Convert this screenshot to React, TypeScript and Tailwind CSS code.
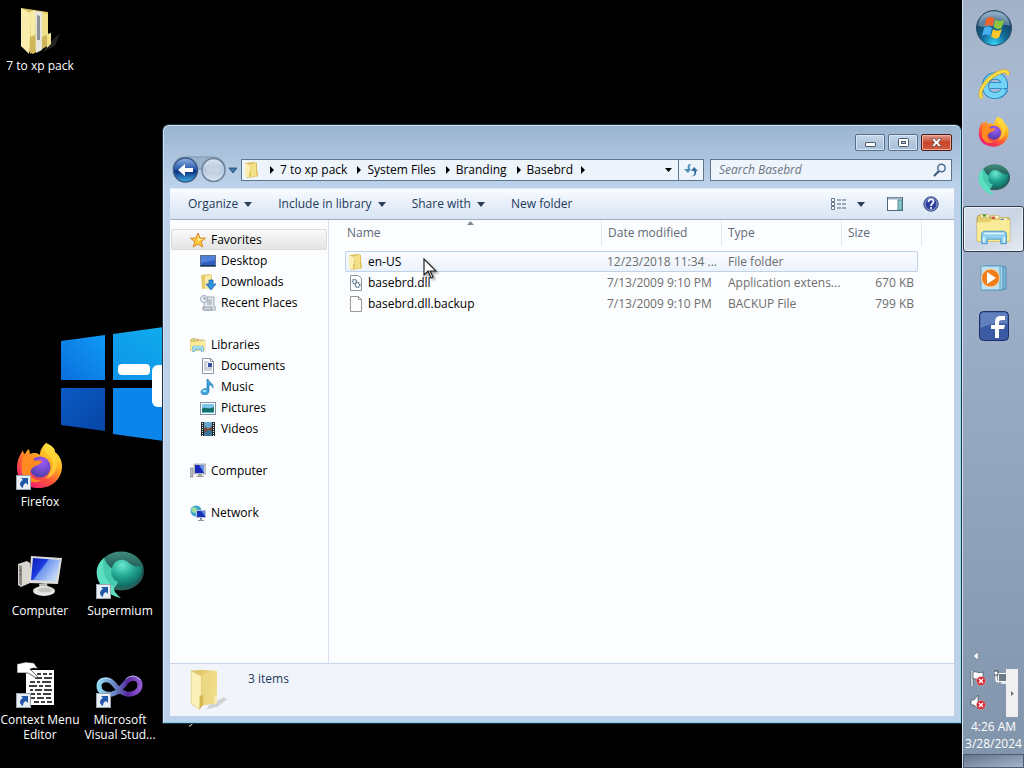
import type { ReactNode } from "react";

type IconProps = { className?: string };

const FirefoxIcon = ({ className }: IconProps) => (
  <svg viewBox="0 0 48 48" className={className} aria-hidden="true">
    <defs>
      <linearGradient id="ffBody" x1="0.85" y1="0.05" x2="0.25" y2="0.95">
        <stop offset="0" stopColor="#fff04a" />
        <stop offset="0.35" stopColor="#ffb01e" />
        <stop offset="0.65" stopColor="#ff5b36" />
        <stop offset="1" stopColor="#ee1d6f" />
      </linearGradient>
      <radialGradient id="ffGlobe" cx="0.6" cy="0.25" r="0.8">
        <stop offset="0" stopColor="#a25bf5" />
        <stop offset="1" stopColor="#4a3ba8" />
      </radialGradient>
    </defs>
    <path
      d="M30 1c-4 4-6 7-6 12-4-3-7-2-10-1l-1-5c-2 1-3 3-4 5-1 0-2-2-2-4-3 5-6 10-6 18 0 12 9 20 22 20s23-9 23-22c0-6-3-11-7-14 0-4-3-6-9-9z"
      fill="url(#ffBody)"
    />
    <circle cx="24" cy="25" r="10.500" fill="url(#ffGlobe)" />
    <path d="M7 14c5-1 9 1 12 5 2-1 5-1 7 0-1 3-4 4-7 5-3 2-5 4-5 8 2 5 6 7 12 6-9 5-18 1-20-7-1-6 0-12 1-17z" fill="#ff8a1f" />
    <path d="M30 1c6 6 12 12 11 22-1 7-5 12-11 14 4-6 8-12 6-19-2-5-11-9-6-17z" fill="#ffd83a" opacity="0.75" />
  </svg>
);

const SupermiumIcon = ({ className }: IconProps) => (
  <svg viewBox="0 0 48 48" className={className} aria-hidden="true">
    <defs>
      <radialGradient id="smBall" cx="0.35" cy="0.2" r="0.8">
        <stop offset="0" stopColor="#6be8cf" />
        <stop offset="0.5" stopColor="#24a893" />
        <stop offset="1" stopColor="#0b6a60" />
      </radialGradient>
      <linearGradient id="smRing" x1="0" y1="0" x2="0" y2="1">
        <stop offset="0" stopColor="#3f8c7c" />
        <stop offset="0.5" stopColor="#1f5450" />
        <stop offset="1" stopColor="#2c6661" />
      </linearGradient>
    </defs>
    <ellipse cx="25" cy="20" rx="23" ry="19.500" fill="url(#smRing)" />
    <path d="M16 17c2-8 11-11 17-5 5 4 9 4 13 3 1 13-9 21-21 21-6-1-11-9-9-19z" fill="url(#smBall)" />
    <path d="M8 7C1 12-1 21 2 29c4 9 12 16 23 18-5-4-7-7-7-10 2-2 3-4 4-6-6-2-8-8-6-13-4-3-6-6-8-11z" fill="#5ddfc2" />
    <path d="M8 7c2 5 5 8 9 11-2 6 0 10 5 13l-4 5C9 30 5 18 8 7z" fill="#35bda0" opacity="0.6" />
  </svg>
);

const PackFolderIcon = ({ className }: IconProps) => (
  <svg viewBox="0 0 48 48" className={className} aria-hidden="true">
    <path d="M30 40l14-13-5 13-12 6z" fill="#8a8a8a" opacity="0.25" />
    <path d="M5 2l27 4v33l-6 3-9 6-12-8z" fill="#d8c45c" />
    <path d="M14 6l5-2v39l-4 4z" fill="#f6eca6" />
    <path d="M19 5l7 1v38l-6 3z" fill="#e8e6df" />
    <path d="M21 9l3 1v24l-3 0z" fill="#8d9196" />
    <path d="M26 6l6 2v31l-6 4z" fill="#efe08a" />
    <path d="M5 2l9 5v24l-1 17-8-8z" fill="#f9ecac" />
    <path d="M14 31l5-2v16l-5 3zM26 31l5-2v11l-5 3z" fill="#cdb75a" />
    <path d="M31 28l4-1v11l-4 4z" fill="#f1e28c" />
  </svg>
);

const OpenFolderIcon = ({ className }: IconProps) => (
  <svg viewBox="0 0 48 48" className={className} aria-hidden="true">
    <defs>
      <linearGradient id="folderInner" x1="0" y1="0" x2="1" y2="0">
        <stop offset="0" stopColor="#d9bd5c" />
        <stop offset="1" stopColor="#f3e08f" />
      </linearGradient>
    </defs>
    <path d="M27 41l16-9 4 2-10 8-12 3z" fill="#a8a8a0" opacity="0.45" />
    <path d="M8 3l10-1 18 1v32l-4 4-13 2z" fill="url(#folderInner)" />
    <path d="M19 8l14-4 3 1v32l-17 4z" fill="#f0dc88" opacity="0.7" />
    <path d="M8 3l11 6v21l-2 15-9-6z" fill="#fbf0b8" stroke="#dfc977" strokeWidth="0.800" />
    <path d="M17 30h4v10l-4 5z" fill="#d5b74f" />
    <path d="M33 30l3-1v9l-3 2z" fill="#faedaf" />
  </svg>
);

const ComputerIcon = ({ className }: IconProps) => (
  <svg viewBox="0 0 48 48" className={className} aria-hidden="true">
    <defs>
      <linearGradient id="pcScreen" x1="0" y1="0" x2="1" y2="0.6">
        <stop offset="0" stopColor="#0a1fb4" />
        <stop offset="0.45" stopColor="#1c3be0" />
        <stop offset="0.5" stopColor="#6f95ef" />
        <stop offset="1" stopColor="#c2d8f8" />
      </linearGradient>
    </defs>
    <path d="M2 13l9-3 3 2v20l-9 4-3-2z" fill="#d9d7d0" />
    <path d="M3 14l3 1v20l-3-2z" fill="#8f8d87" />
    <path d="M4 19l1 1M4 23l1 1" stroke="#333" />
    <path d="M23 33l8-1 1 6h-8z" fill="#bdbcb7" />
    <ellipse cx="28" cy="40" rx="11" ry="5" fill="#e6e5e1" />
    <ellipse cx="29" cy="39" rx="7" ry="2.500" fill="#c5c4bf" />
    <path d="M15 5l31 2-4 26-29-1z" fill="#dcdcda" />
    <path d="M17 7l27 2-4 21-25-1z" fill="url(#pcScreen)" />
  </svg>
);

const ContextMenuIcon = ({ className }: IconProps) => (
  <svg viewBox="0 0 48 48" className={className} aria-hidden="true">
    <path d="M10 10h28v35H10z" fill="#fff" />
    <path
      d="M21 14h4m2 0h4m2 0h3M19 18h7m2 0h8M14 22h5m2 0h3m2 0h9M13 26h8m2 0h4m2 0h6M14 30h3m2 0h7m2 0h8M13 34h6m2 0h4m2 0h8M14 38h5m2 0h7m2 0h5M18 42h5m2 0h4m2 0h5"
      stroke="#000"
      strokeWidth="1.600"
    />
    <path d="M1 4l9-2 8 1 4 6-4-1-4 1 7 7 1 3-10-6H1z" fill="#fff" stroke="#000" strokeWidth="0.600" />
  </svg>
);

const VisualStudioIcon = ({ className }: IconProps) => (
  <svg viewBox="0 0 48 48" className={className} aria-hidden="true">
    <defs>
      <linearGradient id="vsLoop" x1="0" y1="0" x2="1" y2="0">
        <stop offset="0" stopColor="#8ed6ee" />
        <stop offset="0.5" stopColor="#5d69b4" />
        <stop offset="0.7" stopColor="#5a25a0" />
        <stop offset="1" stopColor="#8f5ad0" />
      </linearGradient>
    </defs>
    <path
      d="M3 26c0-7 9-8 14-3 4 5 8 10 14 11 7 1 13-3 13-9 0-7-8-9-13-4-5 6-9 12-15 13C9 35 3 32 3 26z"
      fill="none"
      stroke="url(#vsLoop)"
      strokeWidth="5"
    />
    <path d="M2 23c3-5 8-6 13-3M30 19c4-4 10-4 14 1" fill="none" stroke="#d5efff" strokeWidth="1" opacity="0.7" />
  </svg>
);

const StartOrb = () => (
  <svg viewBox="0 0 40 40" className="size-10" aria-hidden="true">
    <defs>
      <radialGradient id="orb" cx="0.5" cy="0.95" r="0.85">
        <stop offset="0" stopColor="#35d4f5" />
        <stop offset="0.4" stopColor="#12709f" />
        <stop offset="0.8" stopColor="#164568" />
        <stop offset="1" stopColor="#5d86a4" />
      </radialGradient>
    </defs>
    <circle cx="20" cy="20" r="17.500" fill="url(#orb)" stroke="#2d4a66" />
    <path d="M4 18C6 8 12 3.500 20 3.500S34 8 36 18c-9-4-22 3-32 0z" fill="#dcecf5" opacity="0.35" />
    <path d="M12.500 10.500c3-2 5-2 8 0l-2 8c-3-2-5-2-8 0z" fill="#f0632a" />
    <path d="M21.500 11.500c3 2 5 2 9 0l-3 8.500c-3 2-5 1-8-1z" fill="#8cc63e" />
    <path d="M10 20c3-2 5-2 8 0l-2 8c-3-2-5-2-8 0z" fill="#47aef0" />
    <path d="M19 21c3 2 5 2 9 0l-3 8.500c-3 2-5 1-8-1z" fill="#fcc62c" />
  </svg>
);

const ExplorerBrowserIcon = () => (
  <svg viewBox="0 0 32 32" className="size-8" aria-hidden="true">
    <path
      d="M27 21c-2 4-5 6.500-10 6.500-6 0-9.500-4-9.500-9.500S11 8 17 8s9.500 3.500 9.500 9.500H12"
      fill="none"
      stroke="#1878b8"
      strokeWidth="7"
    />
    <path
      d="M26.500 21.500c-2 3.500-5 6-9.500 6-6 0-9.500-4-9.500-9.500S11 8 17 8s9.500 3.500 9.500 9.500H12"
      fill="none"
      stroke="#74d4f8"
      strokeWidth="5.400"
    />
    <path d="M4 30C-1 25 7 12 18 6c7-4 12-4 12 1" fill="none" stroke="#c99b1c" strokeWidth="3.800" />
    <path d="M4 30C-1 25 7 12 18 6c7-4 12-4 12 1" fill="none" stroke="#f9dc4a" strokeWidth="2.600" />
  </svg>
);

const LibraryIcon = ({ className }: IconProps) => (
  <svg viewBox="0 0 32 32" className={className} aria-hidden="true">
    <path d="M2 4h9l2 2h16l1 2v19H1V6z" fill="#e3cd6d" stroke="#b19a42" strokeWidth="0.800" />
    <path d="M4 3h7l1 3H4zM13 4h7l1 3h-7zM21 6h7v3h-6z" fill="#fff6cb" stroke="#c4ad54" strokeWidth="0.600" />
    <path d="M6 3h3v2H6z" fill="#4d9c3c" />
    <path d="M14 5h3v2h-3z" fill="#d65336" />
    <path d="M22 7h3v1h-3z" fill="#4a7fc3" />
    <path d="M1 10h11l2-2h16v19H1z" fill="#faeb98" />
    <path d="M5 21c0-2 1-3 3-3h16c2 0 3 1 3 3v8h-5v-4H10v4H5z" fill="#8fd0ee" stroke="#3f93c4" strokeWidth="0.800" />
    <path d="M7 20h18M7 23v5M25 23v5" stroke="#dff4fc" strokeWidth="1.500" />
  </svg>
);

const MediaPlayerIcon = () => (
  <svg viewBox="0 0 32 32" className="size-8" aria-hidden="true">
    <path d="M10 5h18v22H10z" fill="#7fb9d6" stroke="#4b8fb5" />
    <path d="M7 4h18v24H7z" fill="#a5d4ea" stroke="#4b8fb5" />
    <path d="M3 4h19v24H3z" fill="#bfe2f1" stroke="#5c9fc2" />
    <circle cx="12.500" cy="16" r="9" fill="#f07d1b" stroke="#fbd2a0" />
    <path d="M9 10l9 6-9 6z" fill="#fff" />
  </svg>
);

const FacebookIcon = () => (
  <svg viewBox="0 0 32 32" className="size-8" aria-hidden="true">
    <rect x="1.500" y="1.500" width="29" height="29" rx="4" fill="#3b5ba5" stroke="#1d2f66" />
    <path d="M2.500 5a3 3 0 0 1 3-2.500h21a3 3 0 0 1 3 2.500v9c-9-2-18 0-27 4z" fill="#7d97cf" opacity="0.6" />
    <path d="M17 28V19h-4v-4h4v-3c0-4 2-6 6-6h4v4h-3c-2 0-3 1-3 2v3h6l-1 4h-5v9z" fill="#fff" />
  </svg>
);

const ShortcutBadge = () => (
  <svg viewBox="0 0 15 15" className="absolute bottom-0 left-0 size-[15px]" aria-hidden="true">
    <rect width="15" height="15" fill="#e9eef4" />
    <rect x="0.500" y="0.500" width="14" height="14" fill="none" stroke="#9aa4b0" />
    <path d="M5 3h7v7l-2-2c-2 1-3 2-3 5-4-2-4-6 0-8z" fill="#1f58a8" />
  </svg>
);

const FolderSmall = () => (
  <svg viewBox="0 0 16 16" className="size-4 shrink-0" aria-hidden="true">
    <path d="M1 1l9-1 3 1v13l-3 1-7 1z" fill="#dcbd55" />
    <path d="M6 2l6-1v13l-5 1z" fill="#f5e08a" />
    <path d="M1 1l5 2v13l-5-2z" fill="#fbefb3" />
    <path d="M5 10h2v4l-2 2zM12 9h2v5l-2 1z" fill="#e4c766" />
  </svg>
);

const StarIcon = () => (
  <svg viewBox="0 0 16 16" className="size-4" aria-hidden="true">
    <path d="M8 1l2 5 5.500.2-4.300 3.500 1.600 5.300L8 12l-4.800 3 1.600-5.300L.5 6.200 6 6z" fill="#ffc83c" stroke="#d9862a" />
    <path d="M8 3l1.300 4L13 7.300 8 9z" fill="#fff0a8" />
  </svg>
);

const DesktopSmall = () => (
  <svg viewBox="0 0 16 16" className="size-4" aria-hidden="true">
    <rect x="0.500" y="2.500" width="15" height="11" fill="#2f5fc4" stroke="#5b6f8c" />
    <path d="M1 3h14v4L1 10z" fill="#6b98e6" opacity="0.6" />
    <path d="M1 12h14v1H1z" fill="#1b2f52" />
  </svg>
);

const DownloadsSmall = () => (
  <svg viewBox="0 0 16 16" className="size-4" aria-hidden="true">
    <path d="M1 1l8-1 3 1v13l-10 1z" fill="#e5ca68" />
    <path d="M5 2l6-1v12l-6 2z" fill="#f9ecac" />
    <path d="M9 6h4v4h3l-5 6-5-6h3z" fill="#2f93dd" stroke="#1a5f9f" strokeWidth="0.700" />
  </svg>
);

const RecentSmall = () => (
  <svg viewBox="0 0 16 16" className="size-4" aria-hidden="true">
    <path d="M5 2h9v10h2v3H5l-1-3z" fill="#e8ecf0" stroke="#8a96a3" strokeWidth="0.800" />
    <path d="M7 5h5M7 7h5M7 9h5M3 12h9v3H3z" stroke="#7e8c9b" fill="#d3dae1" strokeWidth="0.800" />
    <circle cx="4" cy="4" r="3.500" fill="#eef3f8" stroke="#8393a6" strokeWidth="0.800" />
    <path d="M4 2v2h2" stroke="#55657a" strokeWidth="0.800" fill="none" />
  </svg>
);

const DocumentSmall = () => (
  <svg viewBox="0 0 16 16" className="size-4" aria-hidden="true">
    <path d="M2.500.5h8l3 3v12h-11z" fill="#fff" stroke="#8a93a8" />
    <path d="M4 4h5M4 6h3M4 8h3M4 10h8M4 12h8" stroke="#97a3bb" />
    <path d="M8 5h4v4H8z" fill="#3d4fa3" />
    <path d="M10.500.5v3h3" fill="none" stroke="#8a93a8" />
  </svg>
);

const MusicSmall = () => (
  <svg viewBox="0 0 16 16" className="size-4" aria-hidden="true">
    <path d="M8 0c0 3 6 4 5 9-1-3-3-3-4-3v6c0 5-8 5-8 1 0-3 4-4 6-3V0z" fill="#3ba3da" stroke="#1d6fa8" strokeWidth="0.600" />
    <ellipse cx="4.500" cy="12" rx="2" ry="1.200" fill="#a2dcf5" />
  </svg>
);

const PicturesSmall = () => (
  <svg viewBox="0 0 16 16" className="size-4" aria-hidden="true">
    <rect x="0.500" y="2.500" width="15" height="12" fill="#fff" stroke="#7f93a8" />
    <path d="M2 4h12v9H2z" fill="#7cc7ee" />
    <path d="M2 9c3-3 6 1 12-2v6H2z" fill="#15716f" />
    <path d="M2 12h12v1H2z" fill="#64b6c2" />
  </svg>
);

const VideosSmall = () => (
  <svg viewBox="0 0 16 16" className="size-4" aria-hidden="true">
    <path d="M1 1h14v14H1z" fill="#20262e" />
    <path d="M4 1h8v7H4z" fill="#67a5cf" />
    <path d="M4 8h8v7H4z" fill="#3a749d" />
    <path d="M5 5l3 3 4-3v5L8 9l-4 3z" fill="#7a4c34" />
    <path d="M2.500 2v13M13.500 2v13" stroke="#e8eef2" strokeDasharray="1 1" />
  </svg>
);

const ComputerSmall = () => (
  <svg viewBox="0 0 16 16" className="size-4" aria-hidden="true">
    <path d="M0 5h3v9H0z" fill="#b9bcc0" stroke="#77797d" strokeWidth="0.600" />
    <path d="M4 1h12v10H4z" fill="#c9cdd2" stroke="#8b8f96" strokeWidth="0.600" />
    <path d="M5 2h9v8H5z" fill="#1526b8" />
    <path d="M9 2h5v8z" fill="#6e92e6" />
    <path d="M8 11h4v2h2v1H6v-1h2z" fill="#9fa3a8" />
  </svg>
);

const NetworkSmall = () => (
  <svg viewBox="0 0 16 16" className="size-4" aria-hidden="true">
    <circle cx="6" cy="6" r="5.500" fill="#3fa4cf" />
    <path d="M3 2c3 0 3 2 5 3s-1 4-3 3-3-1-4-3z" fill="#9ce0a1" />
    <path d="M6 5h10v8H6z" fill="#b9c3d0" />
    <path d="M7 6h8v6H7z" fill="#1632b6" />
    <path d="M11 6h4v5z" fill="#5f8be0" />
    <path d="M10 13h2v2h2v1H8v-1h2z" fill="#8b96a5" />
  </svg>
);

const DllIcon = () => (
  <svg viewBox="0 0 16 16" className="size-4 shrink-0" aria-hidden="true">
    <path d="M2.500.5h8l3 3v12h-11z" fill="#fff" stroke="#8f959c" />
    <circle cx="6.500" cy="6.500" r="2" fill="none" stroke="#5b7489" strokeWidth="1.500" strokeDasharray="1.200 0.500" />
    <circle cx="9.500" cy="10" r="2.300" fill="none" stroke="#5b7489" strokeWidth="1.500" strokeDasharray="1.200 0.500" />
  </svg>
);

const BlankFileIcon = () => (
  <svg viewBox="0 0 16 16" className="size-4 shrink-0" aria-hidden="true">
    <path d="M2.500.5h8l3 3v12h-11z" fill="#fdfdfd" stroke="#9a9a9a" />
    <path d="M10.500.5v3h3" fill="none" stroke="#9a9a9a" />
  </svg>
);

const Caret = () => (
  <svg viewBox="0 0 8 5" className="h-[5px] w-2" aria-hidden="true">
    <path d="M0 0h8L4 5z" fill="#2c3f56" />
  </svg>
);

const CrumbArrow = () => (
  <svg viewBox="0 0 4 8" className="h-2 w-1 shrink-0" aria-hidden="true">
    <path d="M0 0l4 4-4 4z" fill="#000" />
  </svg>
);

const TrayError = () => (
  <>
    <circle cx="11" cy="11" r="4.500" fill="#d8242f" stroke="#f3b6b6" strokeWidth="0.500" />
    <path d="M9 9l4 4M13 9l-4 4" stroke="#fff" strokeWidth="1.400" />
  </>
);

const DesktopItem = ({ label, shortcut, place, children }: { label: string; shortcut?: boolean; place: string; children: ReactNode }) => (
  <button type="button" className={`flex flex-col items-center gap-1 pt-1.5 text-white ${place}`}>
    <span className="relative block size-12">
      {children}
      {shortcut && <ShortcutBadge />}
    </span>
    <span className="w-20 text-center text-xs leading-[15px]">{label}</span>
  </button>
);

const sidebar = [
  {
    name: "Favorites",
    icon: <StarIcon />,
    items: [
      { name: "Desktop", icon: <DesktopSmall /> },
      { name: "Downloads", icon: <DownloadsSmall /> },
      { name: "Recent Places", icon: <RecentSmall /> },
    ],
  },
  {
    name: "Libraries",
    icon: <LibraryIcon className="size-4" />,
    items: [
      { name: "Documents", icon: <DocumentSmall /> },
      { name: "Music", icon: <MusicSmall /> },
      { name: "Pictures", icon: <PicturesSmall /> },
      { name: "Videos", icon: <VideosSmall /> },
    ],
  },
  { name: "Computer", icon: <ComputerSmall />, items: [] },
  { name: "Network", icon: <NetworkSmall />, items: [] },
];

const files = [
  { name: "en-US", date: "12/23/2018 11:34 ...", type: "File folder", size: "", icon: <FolderSmall /> },
  { name: "basebrd.dll", date: "7/13/2009 9:10 PM", type: "Application extens...", size: "670 KB", icon: <DllIcon /> },
  { name: "basebrd.dll.backup", date: "7/13/2009 9:10 PM", type: "BACKUP File", size: "799 KB", icon: <BlankFileIcon /> },
];

const crumbs = ["7 to xp pack", "System Files", "Branding", "Basebrd"];

const Wallpaper = () => (
  <svg viewBox="0 0 200 740" className="absolute left-0 top-0 h-[740px] w-[200px]" aria-hidden="true">
    <defs>
      <linearGradient id="pane1" x1="0" y1="1" x2="1" y2="0">
        <stop offset="0" stopColor="#0a6fdc" />
        <stop offset="1" stopColor="#109af6" />
      </linearGradient>
      <linearGradient id="pane2" x1="0" y1="1" x2="1" y2="0">
        <stop offset="0" stopColor="#0e93e8" />
        <stop offset="1" stopColor="#0fb4ee" />
      </linearGradient>
      <linearGradient id="pane3" x1="0" y1="0" x2="1" y2="1">
        <stop offset="0" stopColor="#0a5ac4" />
        <stop offset="1" stopColor="#0746a6" />
      </linearGradient>
    </defs>
    <path d="M61 341l44-6v45H61z" fill="url(#pane1)" />
    <path d="M113 334l87-12v58h-87z" fill="url(#pane2)" />
    <path d="M61 388h44v43l-44-6z" fill="url(#pane3)" />
    <path d="M113 388h87v58l-87-12z" fill="#0b85ea" />
    <rect x="118" y="364" width="32" height="11" rx="4" fill="#fff" />
    <rect x="152" y="365" width="30" height="42" rx="6" fill="#fff" />
    <path d="M189 726c2 0 3-1 4-4" fill="none" stroke="#fff" />
  </svg>
);

const ExplorerWindow = () => (
  <section
    aria-label="Basebrd"
    className="absolute bottom-[45px] left-[163px] right-px top-[125px] flex flex-col rounded-t-md border border-[#cfe2f5] border-b-[#7fd0e8] border-r-[#8fdcf0] bg-[#bbd2ec] bg-linear-to-b from-[#9bb5d0] to-[#bcd2ea] to-[60px] px-1.5 pb-1.5 shadow-[0_0_0_1px_#22303f]"
  >
    <div className="flex h-[33px] items-end justify-end gap-[3px] pb-2 pr-0.5">
      <button
        type="button"
        aria-label="Minimize"
        className="flex h-[17px] w-[30px] items-center justify-center rounded-[2px] border border-[#586f8b] bg-linear-to-b from-[#c7d8ea] via-[#b4c9df] via-50% to-[#a9c1dc] shadow-[inset_0_0_0_1px_#d9e7f5]"
      >
        <span className="mt-1 block h-[5px] w-[11px] rounded-[1px] border border-[#4d5b6d] bg-white" />
      </button>
      <button
        type="button"
        aria-label="Maximize"
        className="flex h-[17px] w-[30px] items-center justify-center rounded-[2px] border border-[#586f8b] bg-linear-to-b from-[#c7d8ea] via-[#b4c9df] via-50% to-[#a9c1dc] shadow-[inset_0_0_0_1px_#d9e7f5]"
      >
        <svg viewBox="0 0 11 9" className="h-[9px] w-[11px]" aria-hidden="true">
          <rect x="0.500" y="0.500" width="10" height="8" rx="1" fill="#fff" stroke="#4d5b6d" />
          <rect x="3.500" y="3.500" width="4" height="2" fill="#b4c9df" stroke="#4d5b6d" />
        </svg>
      </button>
      <button
        type="button"
        aria-label="Close"
        className="flex h-[17px] w-[31px] items-center justify-center rounded-[2px] border border-[#521a1a] bg-linear-to-b from-[#df9b8c] via-[#c7452b] via-50% to-[#d4593d] shadow-[inset_0_0_0_1px_#eaae9f]"
      >
        <svg viewBox="0 0 11 9" className="h-[9px] w-[11px]" aria-hidden="true">
          <path d="M.5.5h3l2 2.500 2-2.500h3L7.500 4.500l3 4h-3l-2-2.500-2 2.500h-3l3-4z" fill="#fff" stroke="#5b4a52" strokeWidth="0.700" />
        </svg>
      </button>
    </div>

    <div className="flex h-[22px] items-center pl-px pr-0.5">
      <svg viewBox="0 0 66 28" className="-my-1 mr-1 h-7 w-[66px] shrink-0" aria-hidden="true">
        <defs>
          <linearGradient id="backBtn" x1="0" y1="0" x2="0" y2="1">
            <stop offset="0" stopColor="#8fb2e0" />
            <stop offset="0.45" stopColor="#2c5cb0" />
            <stop offset="0.55" stopColor="#0c2f7c" />
            <stop offset="1" stopColor="#3fb0ea" />
          </linearGradient>
          <linearGradient id="fwdBtn" x1="0" y1="0" x2="0" y2="1">
            <stop offset="0" stopColor="#dbe6f2" />
            <stop offset="0.5" stopColor="#b6c8dc" />
            <stop offset="1" stopColor="#d7e4f2" />
          </linearGradient>
        </defs>
        <path d="M14 1h28c7 0 12 5 12 12H2C2 6 7 1 14 1z" fill="#9db2cc" stroke="#7b92ad" />
        <circle cx="14.500" cy="14" r="12" fill="url(#backBtn)" stroke="#3b5a85" strokeWidth="1.500" />
        <path d="M7 14l7-6v4h8v4h-8v4z" fill="#fff" />
        <circle cx="42.500" cy="14" r="11.500" fill="url(#fwdBtn)" stroke="#6f8299" strokeWidth="1.500" />
        <path d="M50 14l-7-6v4h-7v4h7v4z" fill="#c8d4e1" />
        <path d="M58 12h8l-4 5z" fill="#3c78ac" stroke="#1d476f" strokeWidth="0.800" />
      </svg>
      <nav aria-label="Address" className="flex h-[22px] min-w-0 flex-1 items-center border border-[#5d7690] bg-[#eef4fc] pl-0.5">
        <FolderSmall />
        {crumbs.map((crumb) => (
          <span key={crumb} className="flex items-center">
            <span className="flex w-5 justify-center pl-1">
              <CrumbArrow />
            </span>
            <a href="#" className="whitespace-nowrap text-xs text-black">
              {crumb}
            </a>
          </span>
        ))}
        <span className="ml-2">
          <CrumbArrow />
        </span>
        <button type="button" aria-label="Previous locations" className="ml-auto flex w-5 items-center justify-center self-stretch">
          <svg viewBox="0 0 7 4" className="h-1 w-[7px]" aria-hidden="true">
            <path d="M0 0h7L3.500 4z" fill="#000" />
          </svg>
        </button>
        <button type="button" aria-label="Refresh" className="flex w-[25px] items-center justify-center self-stretch border-l border-[#5d7690]">
          <svg viewBox="0 0 14 14" className="size-3.5" aria-hidden="true">
            <path d="M7 1C4 1 3 3 4 6H0l4 4 3-4H6c-1-2 0-3 1-5z" fill="#4a8fb8" />
            <path d="M7 13c3 0 4-2 3-5H7l3-4 4 4h-2c1 3-1 6-5 5z" fill="#2d6f9f" />
          </svg>
        </button>
      </nav>
      <div className="ml-1.5 flex h-[22px] w-[242px] items-center border border-[#5d7690] bg-[#eef4fc] pl-2 pr-1">
        <input
          type="search"
          aria-label="Search Basebrd"
          placeholder="Search Basebrd"
          className="min-w-0 flex-1 bg-transparent text-xs italic outline-none placeholder:text-[#6b7480]"
        />
        <svg viewBox="0 0 14 14" className="size-3.5" aria-hidden="true">
          <path d="M1.500 12.500l4-4" stroke="#3a5578" strokeWidth="2" strokeLinecap="round" />
          <circle cx="8.500" cy="5" r="3.700" fill="#eaf3fb" stroke="#4d6b91" strokeWidth="1.500" />
        </svg>
      </div>
    </div>

    <div className="mt-[7px] flex min-h-0 flex-1 flex-col border-t border-[#dfeaf7] bg-[#fcfdfe]">
      <div
        role="toolbar"
        className="flex h-[31px] shrink-0 items-center border-b border-[#a0afc3] bg-linear-to-b from-[#fafcff] via-[#e7effa] via-50% to-[#d9e5f4] pl-[18px] pr-[15px] text-xs text-[#1e395b]"
      >
        <button type="button" className="mr-[26px] flex items-center gap-1.5">
          Organize <Caret />
        </button>
        <button type="button" className="mr-[26px] flex items-center gap-1.5">
          Include in library <Caret />
        </button>
        <button type="button" className="mr-[26px] flex items-center gap-1.5">
          Share with <Caret />
        </button>
        <button type="button">New folder</button>
        <button type="button" aria-label="Change your view" className="ml-auto flex items-center gap-2.5">
          <svg viewBox="0 0 16 13" className="h-[13px] w-4" aria-hidden="true">
            <path d="M.5.5h3v3h-3zM.5 4.500h3v3h-3zM.5 8.500h3v3h-3z" fill="#fff" stroke="#63738a" />
            <path d="M6 2h4m1 0h4M6 6h4m1 0h4M6 10h4m1 0h4" stroke="#4f6079" />
          </svg>
          <Caret />
        </button>
        <button type="button" aria-label="Show the preview pane" className="ml-[22px]">
          <svg viewBox="0 0 16 14" className="h-3.5 w-4" aria-hidden="true">
            <rect x="0.500" y="0.500" width="15" height="13" fill="#fff" stroke="#51657d" />
            <path d="M1 1.500h14" stroke="#9cb0c5" strokeWidth="2" />
            <path d="M11 3h4v10h-4z" fill="#8cc7c8" stroke="#4a8b93" />
          </svg>
        </button>
        <button type="button" aria-label="Get help" className="ml-5">
          <svg viewBox="0 0 16 16" className="size-4" aria-hidden="true">
            <circle cx="8" cy="8" r="7.300" fill="#2d3f9c" stroke="#5d6f98" />
            <circle cx="8" cy="8" r="6" fill="none" stroke="#a9b7de" strokeWidth="0.800" />
            <path d="M5.500 6c0-3.500 5-3.500 5-.5C10.500 8 8 7.500 8 10" fill="none" stroke="#fff" strokeWidth="1.700" />
            <circle cx="8" cy="12" r="1" fill="#fff" />
          </svg>
        </button>
      </div>

      <div className="flex min-h-0 flex-1">
        <nav aria-label="Folders" className="w-[159px] shrink-0 overflow-hidden border-r border-[#d6e2f0] pl-px pt-[9px]">
          {sidebar.map((group) => (
            <div key={group.name} className="mb-[21px]">
              <a
                href="#"
                className={
                  group.name === "Favorites"
                    ? "mr-px flex h-[21px] items-center gap-[5px] rounded-[2px] border border-[#dadada] bg-linear-to-b from-[#fafafa] to-[#e4e4e4] pl-[18px] text-xs text-black"
                    : "flex h-[21px] items-center gap-[5px] pl-[19px] text-xs text-black"
                }
              >
                {group.icon}
                {group.name}
              </a>
              {group.items.map((item) => (
                <a key={item.name} href="#" className="flex h-[21px] items-center gap-[5px] pl-[29px] text-xs text-black">
                  {item.icon}
                  {item.name}
                </a>
              ))}
            </div>
          ))}
        </nav>

        <div className="relative min-w-0 flex-1 overflow-hidden pl-4">
          <svg viewBox="0 0 7 4" className="absolute left-[138px] top-px h-1 w-[7px]" aria-hidden="true">
            <path d="M0 4l3.500-4L7 4z" fill="#7d8b99" />
          </svg>
          <table className="w-[573px] table-fixed border-separate border-spacing-0 text-xs">
            <colgroup>
              <col className="w-[257px]" />
              <col className="w-[120px]" />
              <col className="w-[120px]" />
              <col className="w-[76px]" />
            </colgroup>
            <thead>
              <tr className="h-[26px] text-left text-[#5c6878]">
                <th className="border-r border-[#e2e8ef] pl-0.5 font-normal">Name</th>
                <th className="border-r border-[#e2e8ef] pl-1.5 font-normal">Date modified</th>
                <th className="border-r border-[#e2e8ef] pl-1.5 font-normal">Type</th>
                <th className="relative pl-1.5 font-normal after:absolute after:-right-1 after:top-0 after:h-full after:w-px after:bg-[#e2e8ef]">
                  Size
                </th>
              </tr>
            </thead>
            <tbody>
              <tr aria-hidden="true" className="h-[5px]" />
              {files.map((file, i) => (
                <tr
                  key={file.name}
                  className={
                    i === 0
                      ? "h-[21px] rounded-[2px] bg-linear-to-b from-[#fafcff] to-[#ebf3fd] text-[#6d6d6d] outline -outline-offset-1 outline-[#bfd2e6]"
                      : "h-[21px] text-[#6d6d6d]"
                  }
                >
                  <td className="pl-[3px]">
                    <span className="flex items-center gap-1 text-black">
                      {file.icon}
                      {file.name}
                    </span>
                  </td>
                  <td className="whitespace-nowrap pl-[5px]">{file.date}</td>
                  <td className="whitespace-nowrap pl-1.5">{file.type}</td>
                  <td className="pr-1 text-right">{file.size}</td>
                </tr>
              ))}
            </tbody>
          </table>
        </div>
      </div>

      <footer className="flex h-[53px] shrink-0 items-start gap-[18px] border-t border-[#c9d6e6] bg-[#f1f5fb] pl-3 text-xs text-[#1e395b]">
        <OpenFolderIcon className="size-12 pt-1" />
        <p className="pt-[7px]">3 items</p>
      </footer>
    </div>

    <svg viewBox="0 0 14 21" className="absolute left-[259px] top-[132px] h-[21px] w-3.5 drop-shadow-[2px_2px_1px_rgba(0,0,0,0.35)]" aria-hidden="true">
      <path d="M1 1v16l4-4 3 7 2-1-3-6h6z" fill="#fff" stroke="#222" strokeWidth="1.200" />
    </svg>
  </section>
);

const Taskbar = () => (
  <aside
    aria-label="Taskbar"
    className="relative flex w-[62px] shrink-0 flex-col items-center border-l border-[#d3e2f2] bg-linear-to-b from-[#a2b1c6] via-[#a9bbd4] via-[100px] to-[#8094ab]"
  >
    <button type="button" aria-label="Start" className="flex h-[60px] items-center pb-1">
      <StartOrb />
    </button>
    <button type="button" aria-label="Internet Explorer" className="flex h-12 items-center">
      <ExplorerBrowserIcon />
    </button>
    <button type="button" aria-label="Firefox" className="flex h-12 items-center">
      <FirefoxIcon className="size-8" />
    </button>
    <button type="button" aria-label="Supermium" className="flex h-12 items-center">
      <SupermiumIcon className="size-8" />
    </button>
    <button
      type="button"
      aria-label="Windows Explorer"
      className="my-0.5 flex h-[46px] w-full items-center justify-center rounded-[3px] border border-[#2f3c4c] bg-linear-to-br from-[#d9e1ee] via-[#c9d4e4] to-[#e6ebf2] shadow-[inset_0_0_0_1px_#eef3fa]"
    >
      <LibraryIcon className="size-9" />
    </button>
    <button type="button" aria-label="Windows Media Player" className="flex h-12 items-center">
      <MediaPlayerIcon />
    </button>
    <button type="button" aria-label="Facebook" className="flex h-12 items-center">
      <FacebookIcon />
    </button>

    <div className="mt-auto flex w-full flex-col text-white">
      <button type="button" aria-label="Show hidden icons" className="ml-2.5 flex h-5 w-2 items-center">
        <svg viewBox="0 0 5 8" className="h-2 w-[5px]" aria-hidden="true">
          <path d="M5 0v8L0 4z" fill="#fff" stroke="#4b5c70" strokeWidth="0.500" />
        </svg>
      </button>
      <div className="grid grid-cols-2 gap-y-2 px-[7px] py-1">
        <svg viewBox="0 0 16 16" className="size-4" aria-hidden="true">
          <path d="M2 1v15" stroke="#3c4754" strokeWidth="2.500" />
          <path d="M2 1v15" stroke="#fff" strokeWidth="1.400" />
          <path d="M3 2c4-1 5 2 10 0v7c-5 2-6-1-10 0z" fill="#fff" stroke="#3c4754" strokeWidth="0.700" />
          <TrayError />
        </svg>
        <svg viewBox="0 0 16 16" className="size-4" aria-hidden="true">
          <rect x="4.500" y="3.500" width="12" height="8" fill="#6c7c84" stroke="#fff" />
          <path d="M7 13h9M2 4v5c0 2 1 3 3 3" fill="none" stroke="#fff" strokeWidth="1.500" />
          <path d="M0 1h4v4H0z" fill="#fff" stroke="#3c4754" />
        </svg>
        <svg viewBox="0 0 16 16" className="size-4" aria-hidden="true">
          <path d="M1 6h3l4-5v14l-4-4H1z" fill="#fff" stroke="#3c4754" strokeWidth="0.700" />
          <TrayError />
        </svg>
      </div>
      <time className="block pb-0.5 pt-1 text-center text-xs leading-[17px]">
        4:26 AM
        <br />
        3/28/2024
      </time>
      <button
        type="button"
        aria-label="Show desktop"
        className="h-3.5 w-full border border-[#4d5c70] bg-linear-to-br from-[#66758a] to-[#a5b4c8]"
      />
    </div>
    <button
      type="button"
      aria-label="Expand"
      className="absolute bottom-[51px] right-1.5 flex h-12 w-3 items-center justify-center bg-[#f0f0f0]"
    >
      <svg viewBox="0 0 3 5" className="h-[5px] w-[3px]" aria-hidden="true">
        <path d="M0 0l3 2.500L0 5z" fill="#777" />
      </svg>
    </button>
  </aside>
);

export default function App() {
  return (
    <div className="flex min-h-screen overflow-hidden bg-black font-['Open_Sans','Noto_Sans',sans-serif]">
      <main className="relative flex-1">
        <Wallpaper />
        <div className="relative grid auto-rows-[109px] grid-cols-[80px_80px]">
          <DesktopItem label="7 to xp pack" place="col-start-1 row-start-1">
            <PackFolderIcon className="size-12" />
          </DesktopItem>
          <DesktopItem label="Firefox" shortcut place="col-start-1 row-start-5">
            <FirefoxIcon className="size-12" />
          </DesktopItem>
          <DesktopItem label="Computer" place="col-start-1 row-start-6">
            <ComputerIcon className="size-12" />
          </DesktopItem>
          <DesktopItem label="Supermium" shortcut place="col-start-2 row-start-6">
            <SupermiumIcon className="size-12" />
          </DesktopItem>
          <DesktopItem label="Context Menu Editor" shortcut place="col-start-1 row-start-7">
            <ContextMenuIcon className="size-12" />
          </DesktopItem>
          <DesktopItem label="Microsoft Visual Stud..." shortcut place="col-start-2 row-start-7">
            <VisualStudioIcon className="size-12" />
          </DesktopItem>
        </div>
        <ExplorerWindow />
      </main>
      <Taskbar />
    </div>
  );
}
